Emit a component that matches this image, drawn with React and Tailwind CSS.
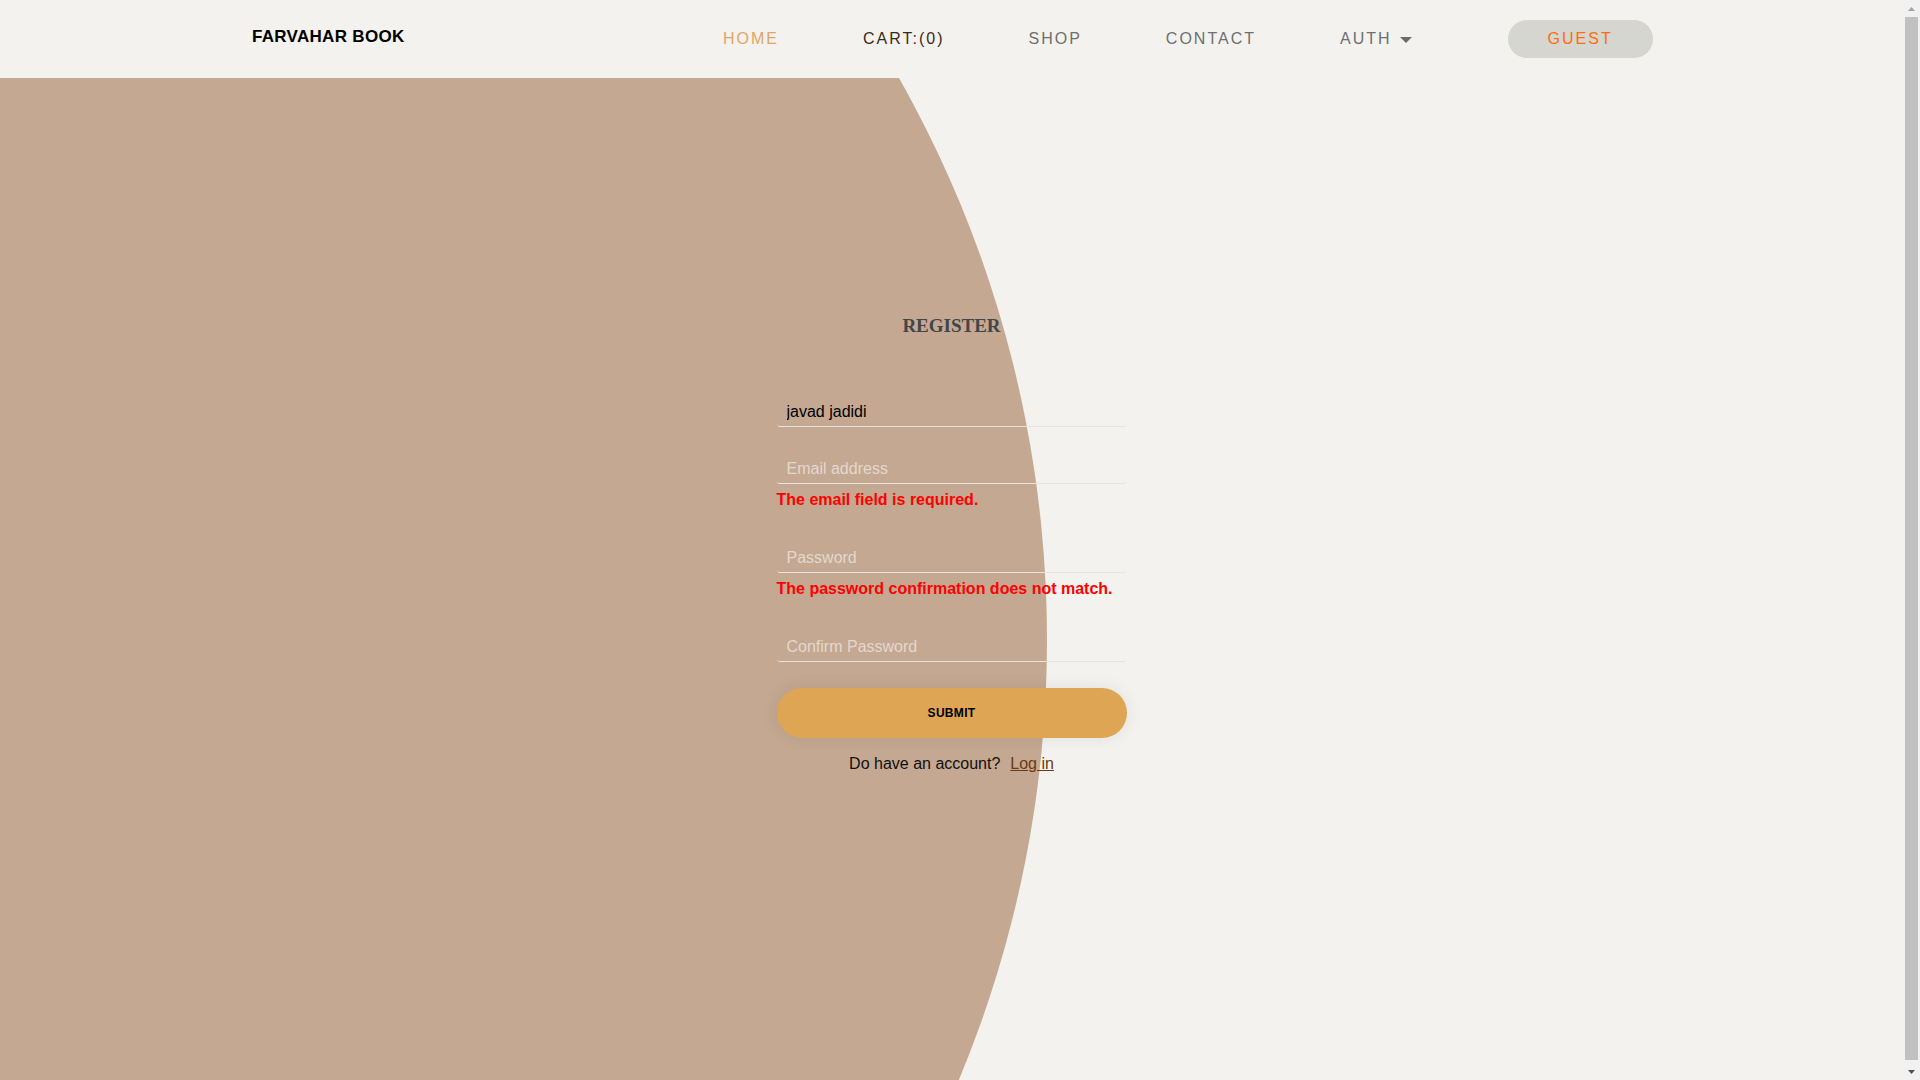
import { useState } from 'react';

const inputCls =
  "block w-full h-[30px] bg-transparent border-b border-[#e8e3de] rounded-b-[3px] pl-[10px] text-[16px] text-black outline-none placeholder:text-[#e3d8ce]";

export default function App() {
  const [form, setForm] = useState({ name: 'javad jadidi', email: '', password: '', confirm: '' });

  return (
    <div className="flex h-[1080px] overflow-hidden bg-[#f3f2ee] font-['Liberation_Sans',Arial,sans-serif]">
      <div className="flex-1 flex flex-col min-w-0">
        {/* Header */}
        <header className="relative z-10 h-[78px] shrink-0 bg-[#f3f2ee] flex items-center pl-[252px]">
          <div className="w-[471px] -mt-[5px] text-[17px] font-bold text-black tracking-[0.3px]">FARVAHAR BOOK</div>
          <nav className="flex items-center gap-[84px] text-[16px] leading-[24px] tracking-[2px]">
            <a className="text-[#e0a566]">HOME</a>
            <a className="text-[#3b2a1c]">CART:(0)</a>
            <a className="text-[#6d6f71]">SHOP</a>
            <a className="text-[#6d6f71]">CONTACT</a>
            <a className="text-[#6d6f71] flex items-center">
              AUTH
              <svg className="ml-[8px] mt-[2px]" width="12" height="6" viewBox="0 0 12 6">
                <path d="M0 0 L12 0 L6 6 Z" fill="#6b6b6b" />
              </svg>
            </a>
          </nav>
          <button className="ml-[96px] h-[38px] px-[40px] rounded-full bg-[#d6d6d0] text-[#ff6c0a] text-[16px] tracking-[2px]">
            GUEST
          </button>
        </header>

        {/* Main */}
        <main className="relative flex-1 overflow-hidden">
          <div className="absolute left-[-1235px] top-[-579px] w-[2282px] h-[2282px] rounded-full bg-[radial-gradient(circle,#c4a891_0%,#c4a891_93%,#bea48d_97.5%,#b89e88_99.8%,#cdb9a6_100%)]" />

          <div className="relative z-10 w-[350px] mx-auto pt-[236px]">
            <h2 className="text-center font-['Liberation_Serif','Times_New_Roman',serif] font-bold text-[19px] leading-[24px] text-[#41464b]">
              REGISTER
            </h2>

            <input
              className={`mt-[59px] ${inputCls}`}
              placeholder="Name"
              value={form.name}
              onChange={e => setForm({ ...form, name: e.target.value })}
            />

            <input
              className={`mt-[27px] ${inputCls}`}
              placeholder="Email address"
              value={form.email}
              onChange={e => setForm({ ...form, email: e.target.value })}
            />
            <p className="h-[32px] pt-[7px] text-[16px] leading-[18px] font-bold text-[#ff0000]">The email field is required.</p>

            <input
              type="password"
              className={`mt-[27px] ${inputCls}`}
              placeholder="Password"
              value={form.password}
              onChange={e => setForm({ ...form, password: e.target.value })}
            />
            <p className="h-[32px] pt-[7px] text-[16px] leading-[18px] font-bold text-[#ff0000]">The password confirmation does not match.</p>

            <input
              type="password"
              className={`mt-[27px] ${inputCls}`}
              placeholder="Confirm Password"
              value={form.confirm}
              onChange={e => setForm({ ...form, confirm: e.target.value })}
            />

            <button className="mt-[26px] block w-full h-[50px] rounded-full bg-[#dea555] text-[12px] font-bold text-black tracking-[0.3px] shadow-[0_0_18px_rgba(0,0,0,0.08)]">
              SUBMIT
            </button>

            <p className="mt-[16px] text-center text-[16px] leading-[20px] text-[#111]">
              Do have an account?
              <a className="ml-[10px] underline text-[#6b3a0f]">Log in</a>
            </p>
          </div>
        </main>
      </div>

      {/* Scrollbar */}
      <div className="w-[17px] shrink-0 flex flex-col bg-[#f1f1f1]">
        <div className="h-[17px] flex items-center justify-center">
          <svg width="7" height="4" viewBox="0 0 7 4"><path d="M0 4 L3.5 0 L7 4 Z" fill="#a3a3a3" /></svg>
        </div>
        <div className="flex-1 mx-[2px] mb-[3px] bg-[#c1c1c1]" />
        <div className="h-[17px] flex items-center justify-center">
          <svg width="7" height="4" viewBox="0 0 7 4"><path d="M0 0 L7 0 L3.5 4 Z" fill="#505050" /></svg>
        </div>
      </div>
    </div>
  );
}
